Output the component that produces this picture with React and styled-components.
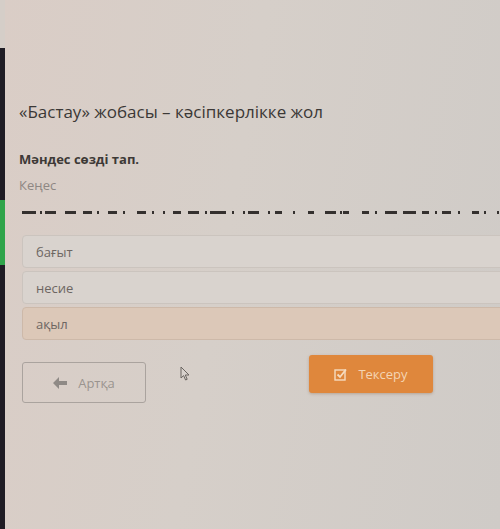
import React from 'react'
import styled, { createGlobalStyle } from 'styled-components'

const GlobalStyle = createGlobalStyle`
  html, body {
    margin: 0;
    padding: 0;
    background: #d5cec8;
  }
  body {
    font-family: 'Open Sans', 'Liberation Sans', sans-serif;
  }
`

// [start, width] of each stroke of the blank line, in px from the left edge of the line
const BLANK = [
  [0, 14], [18, 2], [23, 11], [43, 11], [61, 9], [75, 2], [86, 9], [101, 2],
  [115, 9], [130, 2], [141, 2], [151, 8], [166, 11], [183, 2], [188, 16],
  [210, 2], [221, 2], [226, 11], [246, 2], [253, 7], [271, 2], [286, 6],
  [303, 11], [318, 2], [321, 6], [340, 7], [353, 2], [363, 12], [381, 13],
  [400, 7], [413, 2], [420, 9], [436, 2], [450, 7], [462, 2], [475, 2],
]

const OPTIONS = [
  { label: 'бағыт' },
  { label: 'несие' },
  { label: 'ақыл', picked: true },
]

export default function App() {
  return (
    <>
      <GlobalStyle />
      <Screen>
        <Rail>
          <RailPart $color="#d5cec8" $height={48} />
          <RailPart $color="#1f1c24" $height={152} />
          <RailPart $color="#2fa44a" $height={65} />
          <RailPart $color="#1f1c24" $grow />
        </Rail>
        <Main>
          <Title>«Бастау» жобасы – кәсіпкерлікке жол</Title>
          <Question>Мәндес сөзді тап.</Question>
          <Hint>Кеңес</Hint>
          <Blank>
            {BLANK.map(([x, w], i) => (
              <Stroke key={i} style={{ left: x, width: w }} />
            ))}
          </Blank>
          <Options>
            {OPTIONS.map((o) => (
              <Option key={o.label} $picked={o.picked}>
                {o.label}
              </Option>
            ))}
          </Options>
          <Actions>
            <BackButton>
              <svg width="14" height="12" viewBox="0 0 14 12">
                <path d="M6 0 L0 6 L6 12 L6 8 L14 8 L14 4 L6 4 Z" fill="#8f8a86" />
              </svg>
              Артқа
            </BackButton>
            <Cursor viewBox="0 0 10 15" width="10" height="15">
              <path
                d="M1 1 L1 12 L3.6 9.6 L5.6 14 L7.2 13.3 L5.3 9 L9 9 Z"
                fill="#d8d2cd"
                stroke="#6a6561"
                strokeWidth="1"
              />
            </Cursor>
            <CheckButton>
              <svg width="13" height="13" viewBox="0 0 13 13">
                <rect x="1" y="2" width="10" height="10" fill="none" stroke="#f6dcc0" strokeWidth="1.4" />
                <path d="M3.5 6.5 L6 9 L12 1.5" fill="none" stroke="#f6dcc0" strokeWidth="1.8" />
              </svg>
              Тексеру
            </CheckButton>
          </Actions>
        </Main>
      </Screen>
    </>
  )
}

const Screen = styled.div`
  display: flex;
  width: 500px;
  height: 529px;
  overflow: hidden;
  background: linear-gradient(100deg, #dacdc6 0%, #d6cfc9 45%, #cfcbc7 100%);
`

const Rail = styled.div`
  display: flex;
  flex-direction: column;
  width: 5px;
  flex-shrink: 0;
`

const RailPart = styled.div`
  background: ${(p) => p.$color};
  height: ${(p) => (p.$grow ? 'auto' : `${p.$height}px`)};
  flex: ${(p) => (p.$grow ? 1 : 'none')};
`

const Main = styled.div`
  position: relative;
  flex: 1;
  display: flex;
  flex-direction: column;
  padding: 100px 0 0 14px;
  min-width: 0;
`

const Title = styled.div`
  font-size: 17px;
  line-height: 24px;
  color: #3b3836;
  white-space: nowrap;
`

const Question = styled.div`
  margin-top: 26px;
  font-size: 13px;
  line-height: 18px;
  font-weight: 700;
  color: #3d3936;
`

const Hint = styled.div`
  margin-top: 8px;
  font-size: 13px;
  line-height: 18px;
  color: #8e8783;
`

const Blank = styled.div`
  position: relative;
  margin: 17px 0 0 3px;
  height: 3px;
`

const Stroke = styled.span`
  position: absolute;
  top: 0;
  height: 3px;
  background: #34302e;
`

const Options = styled.div`
  display: flex;
  flex-direction: column;
  gap: 3px;
  margin: 21px -20px 0 3px;
`

const Option = styled.div`
  height: 33px;
  display: flex;
  align-items: center;
  padding-left: 13px;
  border-radius: 4px;
  border: 1px solid ${(p) => (p.$picked ? '#cdb9a9' : '#cbc4be')};
  background: ${(p) => (p.$picked ? '#dcc8b8' : '#d9d3ce')};
  font-size: 13px;
  color: #6d6662;
  box-sizing: border-box;
`

const Actions = styled.div`
  position: relative;
  display: flex;
  align-items: flex-start;
  gap: 163px;
  margin: 15px 0 0 3px;
`

const BaseButton = styled.div`
  box-sizing: border-box;
  width: 124px;
  display: flex;
  align-items: center;
  justify-content: center;
  gap: 11px;
  border-radius: 3px;
  font-size: 13px;
`

const BackButton = styled(BaseButton)`
  margin-top: 7px;
  height: 41px;
  border: 1px solid #aaa39e;
  color: #9a948f;
  background: transparent;
`

const CheckButton = styled(BaseButton)`
  height: 38px;
  background: #df873c;
  color: #f4d5b4;
  box-shadow: 0 1px 3px rgba(120, 70, 30, 0.3);
`

const Cursor = styled.svg`
  position: absolute;
  left: 158px;
  top: 11px;
`
